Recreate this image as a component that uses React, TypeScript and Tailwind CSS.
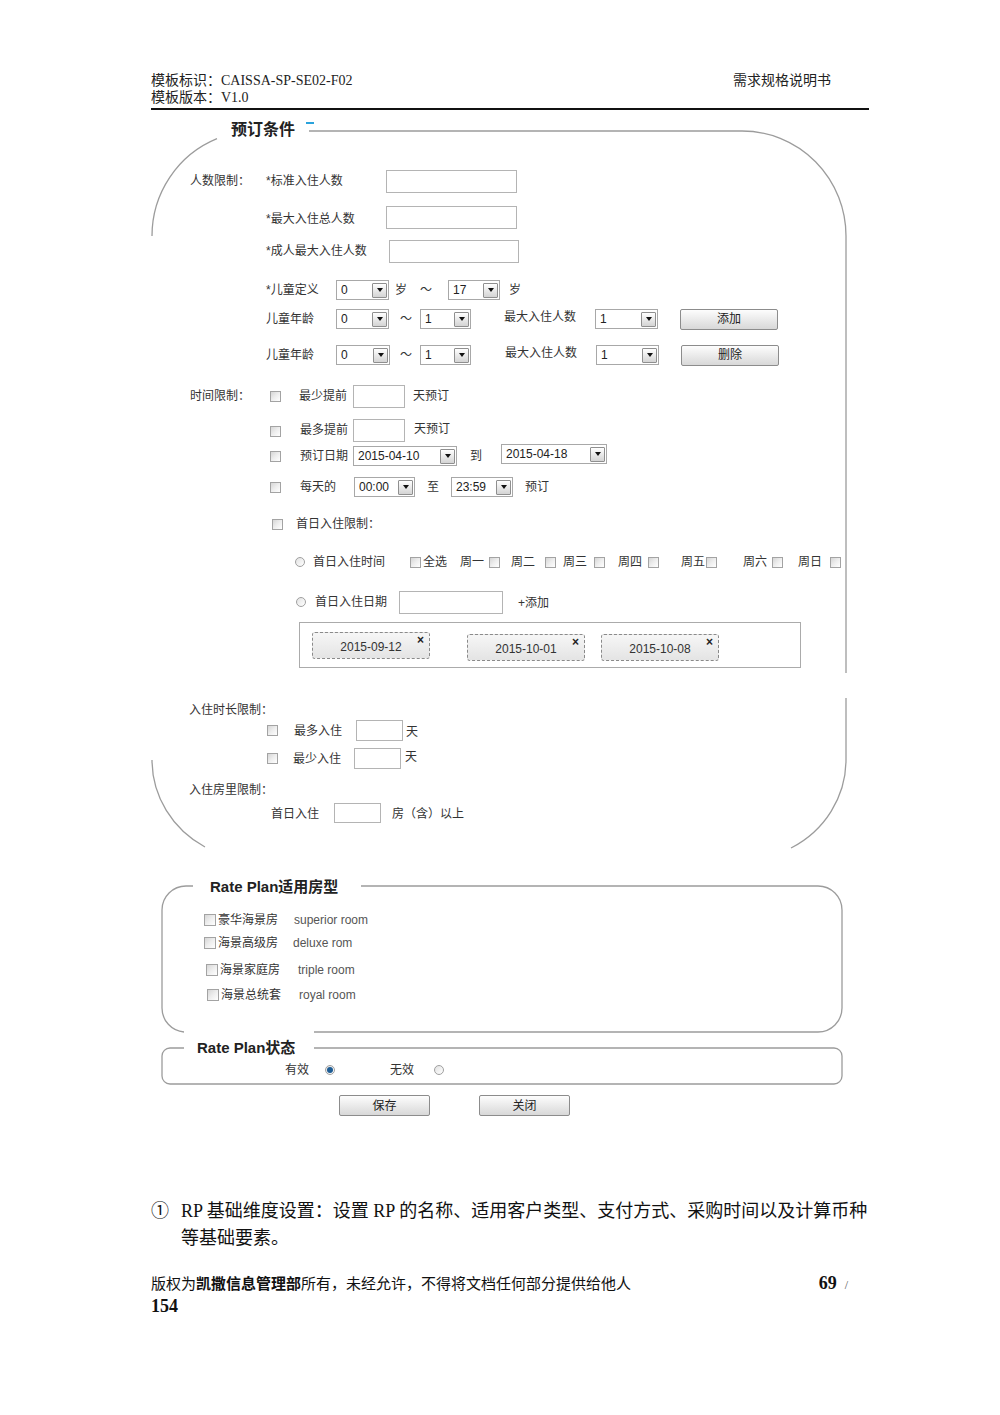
import React from "react";

const ui = "font-['Liberation_Sans','Noto_Sans_CJK_SC',sans-serif]";
const doc = "font-['Liberation_Serif','Noto_Sans_CJK_SC',serif]";

function Box({ className = "" }: { className?: string }) {
  return <span className={`inline-block shrink-0 border border-[#b4b4b4] bg-white ${className}`} />;
}

function Select({ value, className = "" }: { value: string; className?: string }) {
  return (
    <span className={`flex shrink-0 items-center border border-[#a8a8a8] bg-white ${className}`}>
      <span className="flex-1 pl-[4px] text-[12px] leading-none text-[#222]">{value}</span>
      <span className="mr-[1px] flex h-[15px] w-[15px] items-center justify-center rounded-[1px] border border-[#8f8f8f] bg-linear-to-b from-white to-[#d4d4d4]">
        <span className="h-0 w-0 border-x-[3.5px] border-t-[4px] border-x-transparent border-t-[#111]" />
      </span>
    </span>
  );
}

function Check({ className = "" }: { className?: string }) {
  return (
    <span
      className={`inline-block h-[11px] w-[11px] shrink-0 border border-[#a3a3a3] bg-linear-to-br from-[#d6d6d6] via-[#eeeeee] to-white ${className}`}
    />
  );
}

function Radio({ on = false }: { on?: boolean }) {
  return (
    <span className="flex h-[10px] w-[10px] shrink-0 items-center justify-center rounded-full border border-[#a0a0a0] bg-linear-to-br from-[#e2e2e2] to-white">
      {on && <span className="h-[6px] w-[6px] rounded-full bg-[#1d5c94]" />}
    </span>
  );
}

function Button({ label, className = "" }: { label: string; className?: string }) {
  return (
    <span
      className={`flex shrink-0 items-center justify-center rounded-[2px] border border-[#8c8c8c] bg-linear-to-b from-[#fdfdfd] to-[#d8d8d8] text-[12px] leading-none text-[#222] ${className}`}
    >
      {label}
    </span>
  );
}

function Chip({ date, className = "" }: { date: string; className?: string }) {
  return (
    <span
      className={`relative flex h-[27px] w-[118px] shrink-0 items-center justify-center rounded-[3px] border border-dashed border-[#8a8a8a] bg-linear-to-b from-[#f6f6f6] to-[#e4e4e4] pt-[2px] text-[12px] leading-none text-[#333] ${className}`}
    >
      {date}
      <span className="absolute right-[5px] top-[1px] text-[12px] font-bold leading-none text-[#222]">×</span>
    </span>
  );
}

export default function App() {
  return (
    <div className={`relative h-[1415px] w-[1000px] overflow-hidden bg-white ${ui}`}>
      {/* 页眉 */}
      <div className={`ml-[151px] w-[718px] pt-[72px] text-[14px] leading-[17px] text-[#222] ${doc}`}>
        <div className="flex justify-between pr-[38px]">
          <span>模板标识：CAISSA-SP-SE02-F02</span>
          <span>需求规格说明书</span>
        </div>
        <div>模板版本：V1.0</div>
      </div>
      <div className="ml-[151px] mt-[2px] h-[2px] w-[718px] bg-[#111]" />

      {/* 预订条件 */}
      <div className="relative h-[740px] pt-[6px] text-[12px] leading-none text-[#333]">
        <svg
          className="pointer-events-none absolute left-0 top-0"
          width="1000"
          height="740"
          viewBox="0 0 1000 740"
          fill="none"
          stroke="#9c9c9c"
          strokeWidth="1.3"
        >
          <path d="M309 21 L742 21 A104 105 0 0 1 846 126 L846 563" />
          <path d="M846 588 L846 650 A104 100 0 0 1 791 738" />
          <path d="M217 28.6 A104 105 0 0 0 152 126" />
          <path d="M152 650 A104 100 0 0 0 205 737" />
        </svg>

        <div className="flex h-[28px] items-center pl-[231px]">
          <span className="text-[16px] font-bold text-[#222]">预订条件</span>
          <span className="mb-[14px] ml-[11px] h-[2px] w-[8px] bg-[#2aa3dc]" />
        </div>

        <div className="mt-[25px] flex h-[24px] items-center pl-[190px]">
          <span className="w-[76px] shrink-0">人数限制：</span>
          <span className="w-[120px] shrink-0">*标准入住人数</span>
          <Box className="h-[23px] w-[131px]" />
        </div>
        <div className="mt-[12px] flex h-[24px] items-center pl-[266px]">
          <span className="w-[120px] shrink-0 pt-[3px]">*最大入住总人数</span>
          <Box className="h-[23px] w-[131px]" />
        </div>
        <div className="mt-[10px] flex h-[24px] items-center pl-[266px]">
          <span className="w-[123px] shrink-0">*成人最大入住人数</span>
          <Box className="h-[23px] w-[130px]" />
        </div>

        <div className="mt-[17px] flex h-[20px] items-center pl-[266px]">
          <span className="w-[70px] shrink-0">*儿童定义</span>
          <Select value="0" className="h-[20px] w-[53px]" />
          <span className="w-[31px] shrink-0 pl-[6px]">岁</span>
          <span className="w-[28px] shrink-0">～</span>
          <Select value="17" className="h-[20px] w-[52px]" />
          <span className="pl-[9px]">岁</span>
        </div>
        <div className="mt-[8px] flex h-[22px] items-center pl-[266px]">
          <span className="w-[70px] shrink-0">儿童年龄</span>
          <Select value="0" className="h-[20px] w-[53px]" />
          <span className="w-[31px] shrink-0 pl-[11px]">～</span>
          <Select value="1" className="h-[20px] w-[51px]" />
          <span className="w-[33px] shrink-0" />
          <span className="mb-[4px] w-[91px] shrink-0">最大入住人数</span>
          <Select value="1" className="h-[20px] w-[63px]" />
          <span className="w-[22px] shrink-0" />
          <Button label="添加" className="h-[21px] w-[98px]" />
        </div>
        <div className="mt-[14px] flex h-[22px] items-center pl-[266px]">
          <span className="w-[70px] shrink-0">儿童年龄</span>
          <Select value="0" className="h-[20px] w-[54px]" />
          <span className="w-[30px] shrink-0 pl-[10px]">～</span>
          <Select value="1" className="h-[20px] w-[51px]" />
          <span className="w-[34px] shrink-0" />
          <span className="mb-[4px] w-[91px] shrink-0">最大入住人数</span>
          <Select value="1" className="h-[20px] w-[63px]" />
          <span className="w-[22px] shrink-0" />
          <Button label="删除" className="h-[21px] w-[98px]" />
        </div>

        <div className="mt-[18px] flex h-[24px] items-center pl-[190px]">
          <span className="w-[80px] shrink-0">时间限制：</span>
          <Check />
          <span className="ml-[18px] w-[54px] shrink-0">最少提前</span>
          <Box className="h-[23px] w-[52px]" />
          <span className="pl-[8px]">天预订</span>
        </div>
        <div className="mt-[10px] flex h-[24px] items-center pl-[270px]">
          <Check className="mt-[2px]" />
          <span className="ml-[19px] w-[53px] shrink-0">最多提前</span>
          <Box className="h-[23px] w-[52px]" />
          <span className="mb-[3px] pl-[9px]">天预订</span>
        </div>
        <div className="mt-[3px] flex h-[22px] items-center pl-[270px]">
          <Check />
          <span className="ml-[19px] w-[53px] shrink-0">预订日期</span>
          <Select value="2015-04-10" className="h-[20px] w-[104px]" />
          <span className="w-[44px] shrink-0 pl-[13px]">到</span>
          <Select value="2015-04-18" className="mb-[4px] h-[20px] w-[106px]" />
        </div>
        <div className="mt-[10px] flex h-[20px] items-center pl-[270px]">
          <Check />
          <span className="ml-[19px] w-[54px] shrink-0">每天的</span>
          <Select value="00:00" className="h-[20px] w-[61px]" />
          <span className="w-[36px] shrink-0 pl-[12px]">至</span>
          <Select value="23:59" className="h-[20px] w-[62px]" />
          <span className="pl-[12px]">预订</span>
        </div>
        <div className="mt-[17px] flex h-[20px] items-center pl-[272px]">
          <Check />
          <span className="ml-[13px]">首日入住限制：</span>
        </div>

        <div className="mt-[18px] flex h-[20px] items-center pl-[295px]">
          <Radio />
          <span className="ml-[8px] w-[97px] shrink-0">首日入住时间</span>
          <Check />
          <span className="ml-[2px] w-[37px] shrink-0">全选</span>
          <span className="w-[29px] shrink-0">周一</span>
          <Check />
          <span className="ml-[11px] w-[34px] shrink-0">周二</span>
          <Check />
          <span className="ml-[7px] w-[31px] shrink-0">周三</span>
          <Check />
          <span className="ml-[13px] w-[30px] shrink-0">周四</span>
          <Check />
          <span className="ml-[22px] w-[25px] shrink-0">周五</span>
          <Check />
          <span className="ml-[26px] w-[29px] shrink-0">周六</span>
          <Check />
          <span className="ml-[15px] w-[32px] shrink-0">周日</span>
          <Check />
        </div>
        <div className="mt-[18px] flex h-[24px] items-center pl-[296px]">
          <Radio />
          <span className="ml-[9px] w-[84px] shrink-0">首日入住日期</span>
          <Box className="h-[23px] w-[104px]" />
          <span className="pl-[15px] pt-[1px]">+添加</span>
        </div>
        <div className="ml-[299px] mt-[8px] flex h-[46px] w-[502px] items-start border border-[#ababab] pl-[12px] pt-[9px]">
          <Chip date="2015-09-12" />
          <Chip date="2015-10-01" className="ml-[37px] mt-[2px]" />
          <Chip date="2015-10-08" className="ml-[16px] mt-[2px]" />
        </div>

        <div className="mt-[33px] flex h-[18px] items-center pl-[189px]">
          <span>入住时长限制：</span>
        </div>
        <div className="flex h-[22px] items-center pl-[267px]">
          <Check />
          <span className="ml-[16px] w-[62px] shrink-0 pt-[2px]">最多入住</span>
          <Box className="h-[21px] w-[47px]" />
          <span className="pl-[3px] pt-[3px]">天</span>
        </div>
        <div className="mt-[6px] flex h-[22px] items-center pl-[267px]">
          <Check />
          <span className="ml-[15px] w-[61px] shrink-0 pt-[2px]">最少入住</span>
          <Box className="h-[21px] w-[47px]" />
          <span className="mb-[3px] pl-[4px]">天</span>
        </div>
        <div className="mt-[11px] flex h-[20px] items-center pl-[189px]">
          <span>入住房里限制：</span>
        </div>
        <div className="mt-[2px] flex h-[21px] items-center pl-[271px]">
          <span className="w-[63px] shrink-0 pt-[2px]">首日入住</span>
          <Box className="h-[20px] w-[47px]" />
          <span className="pl-[11px] pt-[2px]">房（含）以上</span>
        </div>
      </div>

      {/* Rate Plan 适用房型 / 状态 */}
      <div className="relative mt-[22px] h-[248px] text-[12px] leading-none text-[#333]">
        <svg
          className="pointer-events-none absolute left-0 top-0"
          width="1000"
          height="248"
          viewBox="0 0 1000 248"
          fill="none"
          stroke="#9c9c9c"
          strokeWidth="1.3"
        >
          <path d="M193 14 L186 14 A24 24 0 0 0 162 38 L162 136 A24 24 0 0 0 184 160" />
          <path d="M314 160 L818 160 A24 24 0 0 0 842 136 L842 38 A24 24 0 0 0 818 14 L361 14" />
          <path d="M184 176 L170 176 A8 8 0 0 0 162 184 L162 204 A8 8 0 0 0 170 212 L834 212 A8 8 0 0 0 842 204 L842 184 A8 8 0 0 0 834 176 L314 176" />
        </svg>

        <div className="flex h-[28px] items-center pl-[210px]">
          <span className="text-[15px] font-bold text-[#222]">Rate Plan适用房型</span>
        </div>
        <div className="mt-[10px] flex h-[20px] items-center pl-[204px]">
          <Check className="h-[12px] w-[12px]" />
          <span className="ml-[2px] w-[76px] shrink-0">豪华海景房</span>
          <span className="text-[#555]">superior room</span>
        </div>
        <div className="mt-[3px] flex h-[20px] items-center pl-[204px]">
          <Check className="h-[12px] w-[12px]" />
          <span className="ml-[2px] w-[75px] shrink-0">海景高级房</span>
          <span className="text-[#555]">deluxe rom</span>
        </div>
        <div className="mt-[7px] flex h-[20px] items-center pl-[206px]">
          <Check className="h-[12px] w-[12px]" />
          <span className="ml-[2px] w-[78px] shrink-0">海景家庭房</span>
          <span className="text-[#555]">triple room</span>
        </div>
        <div className="mt-[5px] flex h-[20px] items-center pl-[207px]">
          <Check className="h-[12px] w-[12px]" />
          <span className="ml-[2px] w-[78px] shrink-0">海景总统套</span>
          <span className="text-[#555]">royal room</span>
        </div>

        <div className="mt-[30px] flex h-[24px] items-center pl-[197px]">
          <span className="text-[15px] font-bold text-[#222]">Rate Plan状态</span>
        </div>
        <div className="mt-[1px] flex h-[20px] items-center pl-[285px]">
          <span className="w-[40px] shrink-0">有效</span>
          <Radio on />
          <span className="ml-[55px] w-[44px] shrink-0">无效</span>
          <Radio />
        </div>
        <div className="mt-[15px] flex h-[21px] items-center pl-[339px]">
          <Button label="保存" className="h-[21px] w-[91px]" />
          <Button label="关闭" className="ml-[49px] h-[21px] w-[91px]" />
        </div>
      </div>

      {/* 正文 */}
      <div className={`ml-[151px] mt-[78px] flex w-[718px] text-[18px] leading-[27px] text-[#111] ${doc}`}>
        <span className="w-[30px] shrink-0">①</span>
        <div className="whitespace-nowrap">
          RP 基础维度设置：设置 RP 的名称、适用客户类型、支付方式、采购时间以及计算币种
          <br />
          等基础要素。
        </div>
      </div>

      {/* 页脚 */}
      <div className={`ml-[151px] mt-[21px] w-[718px] leading-[21px] text-[#111] ${doc}`}>
        <div className="flex items-center justify-between pr-[21px]">
          <span className="text-[15px]">
            版权为<b>凯撒信息管理部</b>所有，未经允许，不得将文档任何部分提供给他人
          </span>
          <span>
            <b className="text-[18px]">69</b>
            <span className="ml-[8px] text-[12px] text-[#555]">/</span>
          </span>
        </div>
        <div className="text-[18px] font-bold">154</div>
      </div>
    </div>
  );
}
